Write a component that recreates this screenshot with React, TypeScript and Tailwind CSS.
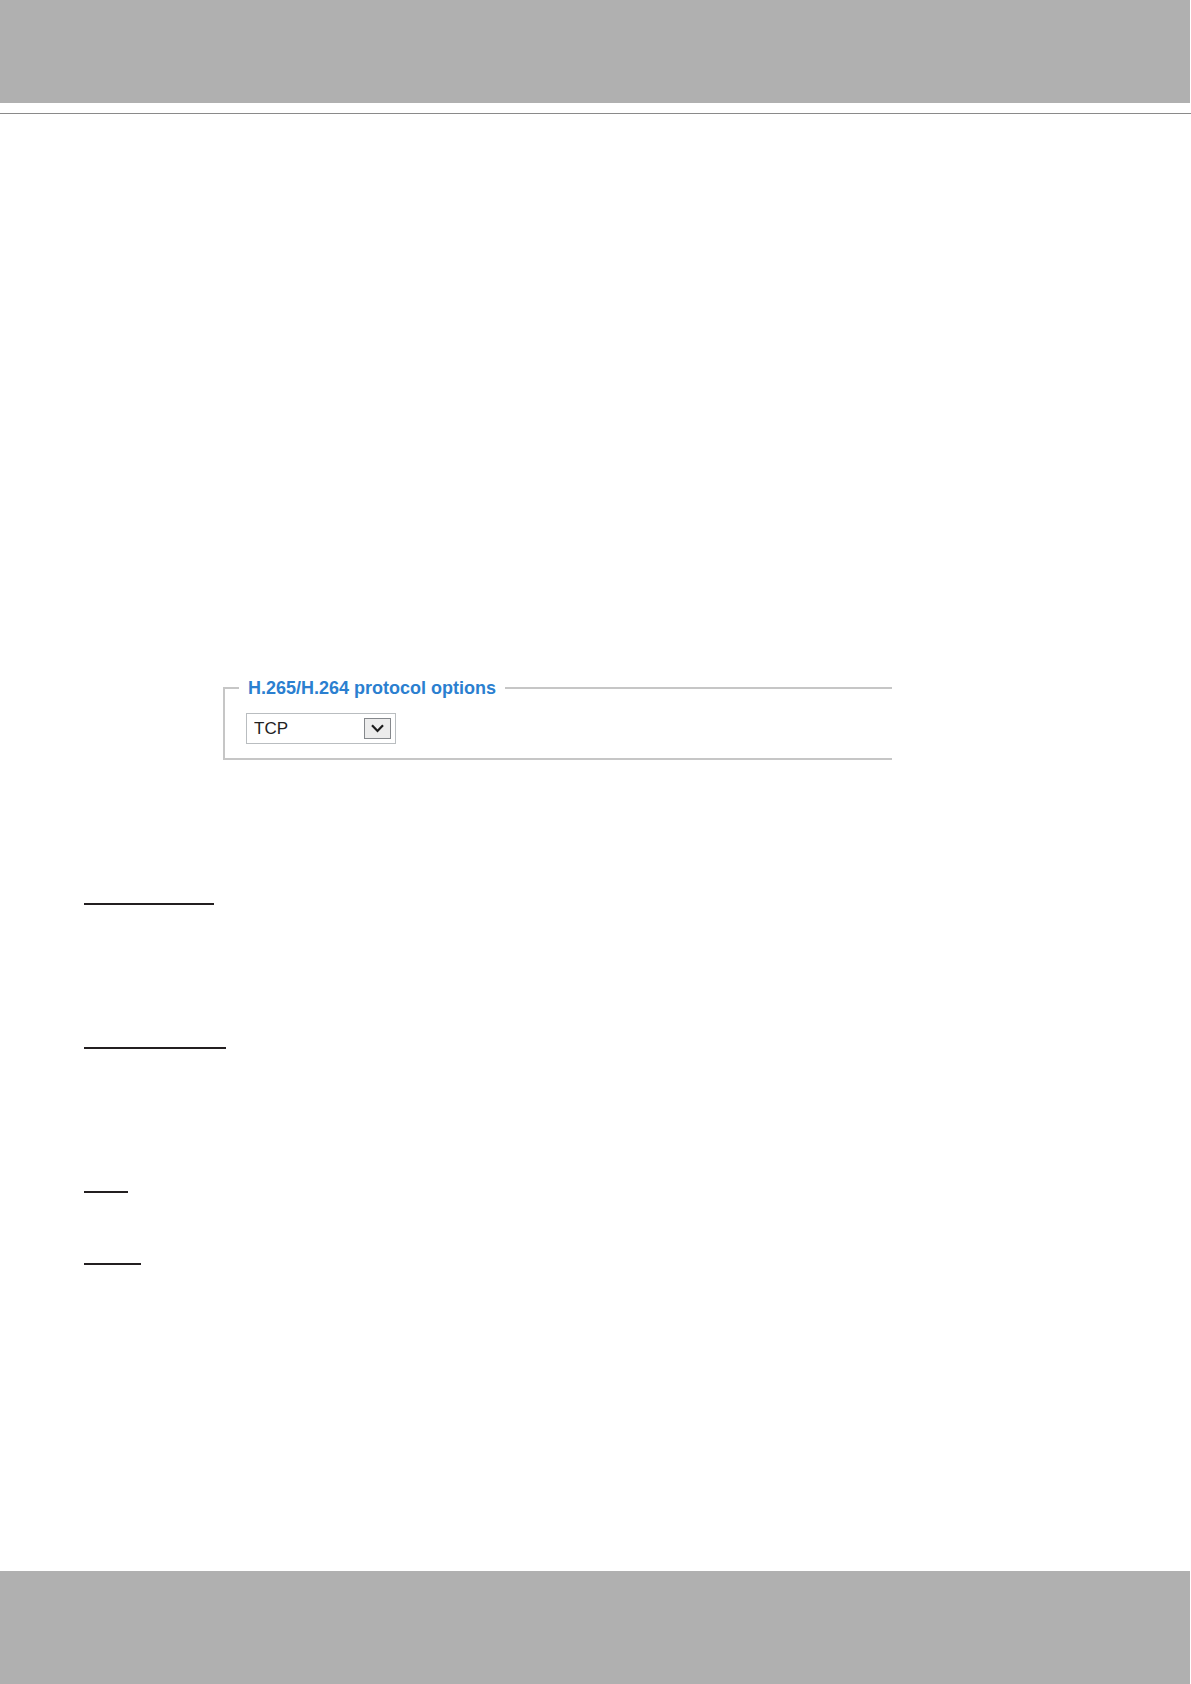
import { useState } from "react";
import { clsx } from "clsx";

const protocols = ["TCP", "UDP", "HTTP"];

const rules = ["w-[130px]", "w-[142px]", "w-11", "w-[57px]"];

const ProtocolOptions = () => {
  const [protocol, setProtocol] = useState("TCP");
  return (
    <fieldset className="ml-[223px] mr-[299px] border-2 border-r-0 border-[#c6c6c6] pl-[21px] pb-[14px]">
      <legend id="protocol-legend" className="-ml-[7px] px-[9px] text-[18px] leading-[28px] font-bold text-[#2b7fd0]">
        H.265/H.264 protocol options
      </legend>
      <div className="mt-[11px] grid w-[150px]">
        <select
          aria-labelledby="protocol-legend"
          value={protocol}
          onChange={(e) => setProtocol(e.target.value)}
          className="col-start-1 row-start-1 h-[31px] w-full appearance-none border border-[#b9bdc0] bg-white pl-[7px] text-[17px] text-[#222222]"
        >
          {protocols.map((p) => (
            <option key={p}>{p}</option>
          ))}
        </select>
        <span className="pointer-events-none col-start-1 row-start-1 mr-[5px] flex h-[21px] w-[27px] items-center justify-center self-center justify-self-end border border-[#85888c] bg-[#ececec]">
          <svg width="13" height="9" viewBox="0 0 13 9" fill="none" stroke="#1c1c1c" strokeWidth="2.2">
            <path d="M1 1.2 6.5 7 12 1.2" />
          </svg>
        </span>
      </div>
    </fieldset>
  );
};

export default function App() {
  return (
    <div className="flex min-h-screen flex-col bg-white font-['Liberation_Sans',Arial,sans-serif]">
      <header>
        <div className="mr-px h-[103px] bg-[#b0b0b0]" />
        <div className="mt-[10px] h-px bg-[#8a8a8a]" />
      </header>
      <main className="flex-1 pt-[560px]">
        <ProtocolOptions />
        <div className="pl-[84px] pt-[143px]">
          {rules.map((width, i) => (
            <hr
              key={width}
              className={clsx("border-t-2 border-[#231f20]", width, i === 3 ? "mt-[70px]" : i > 0 && "mt-[142px]")}
            />
          ))}
        </div>
      </main>
      <footer className="mr-px h-[113px] bg-[#b0b0b0]" />
    </div>
  );
}
